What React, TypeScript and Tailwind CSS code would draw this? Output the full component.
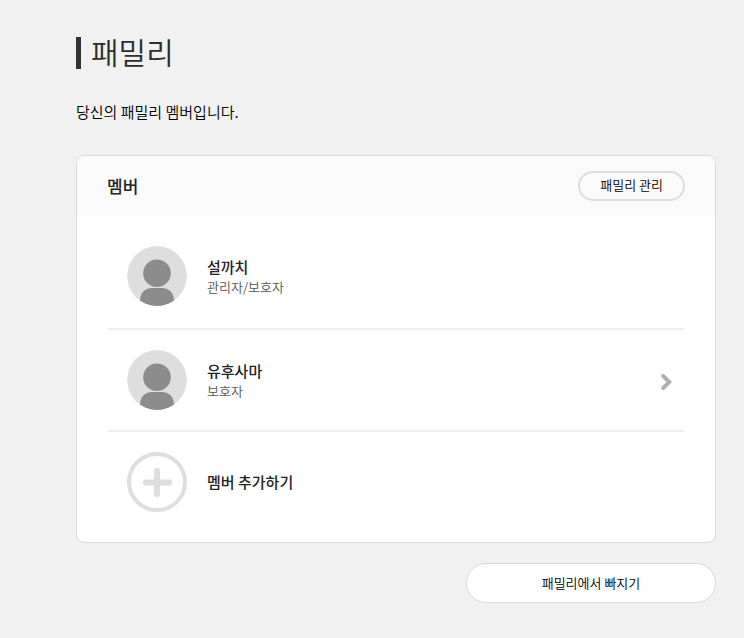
import React from 'react';

interface Member {
  name: string;
  role: string;
  linked: boolean;
}

const members: Member[] = [
  { name: '설까치', role: '관리자/보호자', linked: false },
  { name: '유후사마', role: '보호자', linked: true },
];

const Avatar: React.FC = () => (
  <svg className="size-[60px] shrink-0 rounded-full" viewBox="0 0 60 60" aria-hidden="true">
    <circle cx="30" cy="30" r="30" fill="#dedede" />
    <circle cx="30" cy="27.3" r="13.8" fill="#8c8c8c" />
    <path d="M13 55C13 47 18 42 25 42H35C42 42 47 47 47 55A30 30 0 0 1 13 55Z" fill="#8c8c8c" />
  </svg>
);

const PlusIcon: React.FC = () => (
  <svg className="size-[60px] shrink-0" viewBox="0 0 60 60" fill="none" stroke="#dedede" aria-hidden="true">
    <circle cx="30" cy="30" r="28" strokeWidth="4" />
    <path d="M30 18.8V42.2M18.8 30.5H42.2" strokeWidth="6" strokeLinecap="round" />
  </svg>
);

const ChevronIcon: React.FC = () => (
  <svg className="mr-3 h-5 w-3.5 shrink-0" viewBox="0 0 14 20" fill="none" aria-hidden="true">
    <path d="M4.2 5.9L10.2 12L4.2 18.1" stroke="#afafaf" strokeWidth="4" strokeLinecap="round" strokeLinejoin="miter" />
  </svg>
);

const MemberInfo: React.FC<{ member: Member }> = ({ member }) => (
  <>
    <Avatar />
    <div className="flex-1">
      <p className="text-[15px] leading-[22px] font-medium text-[#222]">{member.name}</p>
      <p className="text-[13px] leading-[18px] font-[350] text-[#555]">{member.role}</p>
    </div>
  </>
);

const App: React.FC = () => {
  return (
    <div className="min-h-screen bg-[#f1f1f1] pt-[37px] pr-7 pb-9 pl-[76px] font-['Noto_Sans_CJK_KR',sans-serif] text-[#222]">
      <h1 className="flex items-start gap-2.5 text-[30px] leading-7 font-[350] text-[#2d2d2d]">
        <span className="h-8 w-[5px] bg-[#333]" />
        패밀리
      </h1>
      <p className="mt-[31px] text-[15px] leading-6 font-[350] text-black">당신의 패밀리 멤버입니다.</p>

      <section className="mt-[31px] overflow-hidden rounded-lg border border-[#d9d9d9] bg-white">
        <div className="flex h-[60px] items-center justify-between bg-[#fafafa] px-[30px]">
          <h2 className="text-[17px] leading-6 font-medium">멤버</h2>
          <button type="button" className="flex h-[30px] items-start justify-center rounded-full border-2 border-[#dcdcdc] px-5 text-[13px] leading-6 font-[350] text-black">
            패밀리 관리
          </button>
        </div>

        <ul className="px-[30px] py-2.5">
          {members.map((member) => (
            <li key={member.name} className="border-b-2 border-[#eee]">
              {member.linked ? (
                <a href="#member" className="flex items-center gap-5 py-5 pl-5">
                  <MemberInfo member={member} />
                  <ChevronIcon />
                </a>
              ) : (
                <div className="flex items-center gap-5 pt-5 pb-[22px] pl-5">
                  <MemberInfo member={member} />
                </div>
              )}
            </li>
          ))}
          <li>
            <a href="#add" className="flex items-center gap-5 py-5 pl-5 text-[15px] leading-5 font-medium">
              <PlusIcon />
              멤버 추가하기
            </a>
          </li>
        </ul>
      </section>

      <div className="mt-5 flex justify-end">
        <button type="button" className="h-10 w-[250px] rounded-full border border-[#d9d9d9] bg-white text-[13px] leading-5 font-[350] text-black">
          패밀리에서 빠지기
        </button>
      </div>
    </div>
  );
};

export default App;
